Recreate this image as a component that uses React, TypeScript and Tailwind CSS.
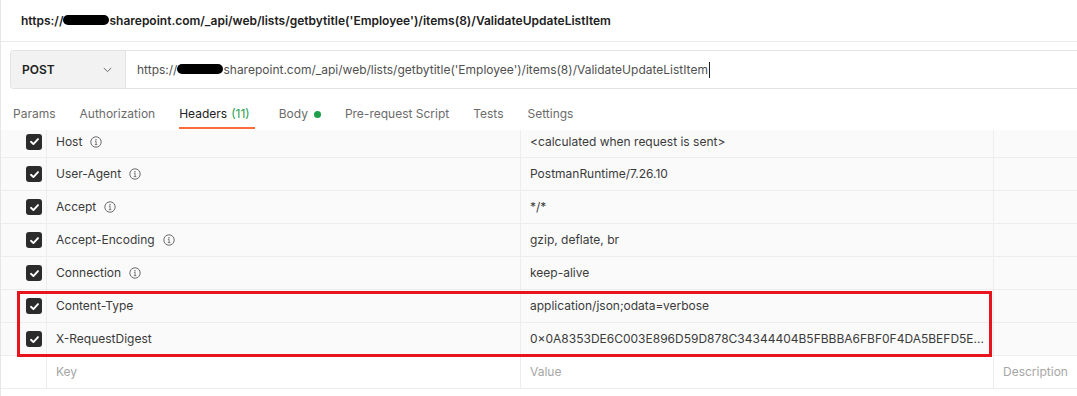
import React from "react";

const Info = () => (
  <svg width="12" height="12" viewBox="0 0 12 12" className="ml-[8px] shrink-0" fill="none">
    <circle cx="6" cy="6" r="5.2" stroke="#6b6b6b" strokeWidth="1" />
    <circle cx="6" cy="3.7" r="0.75" fill="#6b6b6b" />
    <path d="M4.9 5.3H6.1V8.6M4.8 8.6H7.3" stroke="#6b6b6b" strokeWidth="0.9" />
  </svg>
);

const Check = () => (
  <div className="w-[16px] h-[16px] rounded-[3px] bg-[#2b2b2b] flex items-center justify-center">
    <svg width="11" height="11" viewBox="0 0 11 11" fill="none">
      <path d="M2 5.8L4.4 8.1L9 3.1" stroke="#ffffff" strokeWidth="1.9" strokeLinecap="round" strokeLinejoin="round" />
    </svg>
  </div>
);

const Redact = ({ w }: { w: number }) => (
  <span
    className="inline-block h-[10px] bg-black rounded-full align-middle -mt-[2px]"
    style={{ width: w }}
  />
);

type Row = { k: string; v: string; info?: boolean };

const rows: Row[] = [
  { k: "Host", v: "<calculated when request is sent>", info: true },
  { k: "User-Agent", v: "PostmanRuntime/7.26.10", info: true },
  { k: "Accept", v: "*/*", info: true },
  { k: "Accept-Encoding", v: "gzip, deflate, br", info: true },
  { k: "Connection", v: "keep-alive", info: true },
  { k: "Content-Type", v: "application/json;odata=verbose" },
  {
    k: "X-RequestDigest",
    v: "0×0A8353DE6C003E896D59D878C34344404B5FBBBA6FBF0F4DA5BEFD5E...",
  },
];

export default function App() {
  return (
    <div className="relative w-[1077px] h-[396px] overflow-hidden bg-white border-l border-[#e6e6e6] font-[Inter,sans-serif]">
      {/* Title */}
      <div className="h-[42px] border-b border-[#ebebeb] flex items-center pl-[20px] text-[12px] font-semibold text-[#212121] whitespace-nowrap">
        https://
        <Redact w={46} />
        sharepoint.com/_api/web/lists/getbytitle('Employee')/items(8)/ValidateUpdateListItem
      </div>

      {/* Request bar */}
      <div className="pt-[8px] pl-[9px]">
        <div className="flex h-[39px] border border-r-0 border-[#e3e3e3] rounded-l-[4px]">
          <div className="w-[115px] shrink-0 bg-[#f2f2f2] border-r border-[#e3e3e3] rounded-l-[4px] flex items-center justify-between pl-[11px] pr-[13px]">
            <span className="text-[12px] font-semibold text-[#212121]">POST</span>
            <svg width="9" height="6" viewBox="0 0 9 6" fill="none">
              <path d="M0.8 1L4.5 4.6L8.2 1" stroke="#6b6b6b" strokeWidth="1" />
            </svg>
          </div>
          <div className="flex-1 flex items-center pl-[11px] text-[12px] text-[#505050] whitespace-nowrap">
            https://
            <Redact w={46} />
            sharepoint.com/_api/web/lists/getbytitle('Employee')/items(8)/ValidateUpdateListItem
            <span className="inline-block w-[1px] h-[16px] bg-[#212121] ml-[1px]" />
          </div>
        </div>
      </div>

      {/* Tabs */}
      <div className="relative z-10 h-[41px] pt-[9px] bg-white flex items-stretch pl-[12px] gap-[24px] text-[12px] text-[#6b6b6b] whitespace-nowrap">
        <div className="flex items-center">Params</div>
        <div className="flex items-center">Authorization</div>
        <div className="flex items-center relative pr-[5px]">
          <span className="text-[#212121]">Headers</span>
          <span className="text-[#1f9d4b] ml-[4px]">(11)</span>
          <div className="absolute left-0 right-0 bottom-[1px] h-[2px] bg-[#ff6c37]" />
        </div>
        <div className="flex items-center">
          Body
          <span className="inline-block w-[7px] h-[7px] rounded-full bg-[#1d9f4b] ml-[6px]" />
        </div>
        <div className="flex items-center">Pre-request Script</div>
        <div className="flex items-center">Tests</div>
        <div className="flex items-center">Settings</div>
      </div>

      {/* Table */}
      <div className="overflow-hidden">
        <div className="-mt-[5px] text-[12px]">
          {rows.map((r, i) => (
            <div
              key={r.k}
              className={
                i === 0
                  ? "grid grid-cols-[46px_474px_473px_1fr] h-[33px] pt-[1px] bg-[#fafafa] border-b border-[#ededed]"
                  : "grid grid-cols-[46px_474px_473px_1fr] h-[33px] bg-[#fafafa] border-b border-[#ededed]"
              }
            >
              <div className="border-r border-[#ededed] flex items-center justify-end pr-[4px]">
                <Check />
              </div>
              <div className="border-r border-[#ededed] flex items-center pl-[9px] text-[#3a3a3a]">
                {r.k}
                {r.info && <Info />}
              </div>
              <div className="border-r border-[#ededed] flex items-center pl-[9px] pr-[4px] text-[#3a3a3a] min-w-0 whitespace-nowrap">
                {r.v}
              </div>
              <div />
            </div>
          ))}
          <div className="grid grid-cols-[46px_474px_473px_1fr] h-[33px] bg-white border-b border-[#ededed] text-[#a6a6a6]">
            <div className="border-r border-[#ededed]" />
            <div className="border-r border-[#ededed] flex items-center pl-[9px]">Key</div>
            <div className="border-r border-[#ededed] flex items-center pl-[9px]">Value</div>
            <div className="flex items-center pl-[9px]">Description</div>
          </div>
        </div>
      </div>

      {/* Highlight box */}
      <div className="absolute left-[16px] top-[291px] w-[975px] h-[66px] border-[3px] border-[#e8141c] pointer-events-none" />
    </div>
  );
}
